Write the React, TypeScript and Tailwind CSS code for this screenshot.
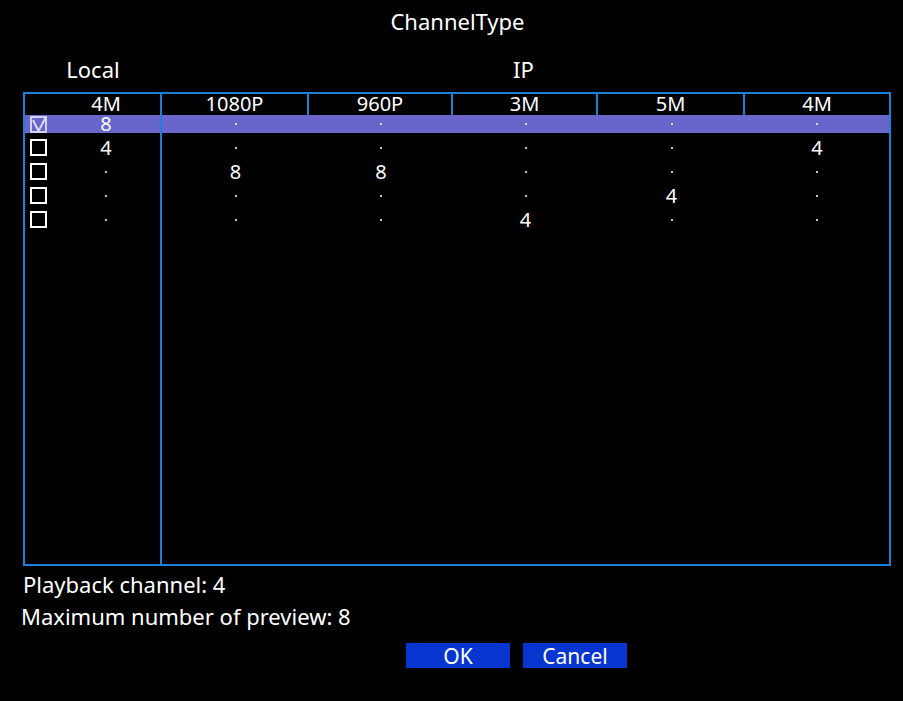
const rows = [
  { checked: true, values: ["8", ".", ".", ".", ".", "."] },
  { checked: false, values: ["4", ".", ".", ".", ".", "4"] },
  { checked: false, values: [".", "8", "8", ".", ".", "."] },
  { checked: false, values: [".", ".", ".", ".", "4", "."] },
  { checked: false, values: [".", ".", ".", "4", ".", "."] },
];

const ipCols = ["1080P", "960P", "3M", "5M", "4M"];
const ipWidths = ["w-[147px]", "w-[144px]", "w-[145px]", "w-[147px]", "flex-1"];

const Cell = ({ value }: { value: string }) =>
  value === "." ? (
    <span className="block w-[2px] h-[2px] rounded-full bg-white" />
  ) : (
    <span className="text-[20px] leading-[16px]">{value}</span>
  );

const CheckBox = ({ checked }: { checked: boolean }) =>
  checked ? (
    <div className="relative w-[17px] h-[17px] border-2 border-[#d2d0f3] mt-[1px]">
      <svg className="absolute -left-[2px] -top-[2px]" width="17" height="17" viewBox="0 0 17 17">
        <polyline points="3,4 8.5,15 16,1" fill="none" stroke="#dcdaf6" strokeWidth="2" />
      </svg>
    </div>
  ) : (
    <div className="w-[17px] h-[17px] border-2 border-white" />
  );

export default function App() {
  return (
    <div
      className="w-[903px] h-[701px] bg-black text-white flex flex-col"
      style={{ fontFamily: '"Noto Sans", "Open Sans", sans-serif' }}
    >
      <div className="mt-[6px] h-[30px] text-[22px] leading-[30px] text-center pl-[12px]">ChannelType</div>

      <div className="mt-[18px] h-[30px] flex px-[23px] text-[22px] leading-[30px]">
        <div className="w-[140px] text-center">Local</div>
        <div className="flex-1 text-center pl-[4px]">IP</div>
      </div>

      <div className="mt-[8px] ml-[23px] w-[868px] h-[474px] border-2 border-[#1a80d8] flex flex-col">
        <div className="flex h-[21px] text-[20px] leading-[20px]">
          <div className="w-[137px] border-r-2 border-[#1a80d8] pl-[27px] text-center">4M</div>
          {ipCols.map((c, i) => (
            <div
              key={i}
              className={`${ipWidths[i]} text-center ${i < 4 ? "border-r-2 border-[#1a80d8]" : ""}`}
            >
              {c}
            </div>
          ))}
        </div>

        <div className="flex flex-1">
          <div className="w-[137px] border-r-2 border-[#1a80d8] flex flex-col">
            {rows.map((r, i) => (
              <div key={i} className="h-[24px]">
                <div className={`h-[18px] flex items-start pl-[5px] ${r.checked ? "bg-[#6866cb]" : ""}`}>
                  <CheckBox checked={r.checked} />
                  <div className="flex-1 h-[18px] pl-[5px] flex items-center justify-center">
                    <Cell value={r.values[0]} />
                  </div>
                </div>
              </div>
            ))}
          </div>
          <div className="flex-1 flex flex-col">
            {rows.map((r, i) => (
              <div key={i} className="h-[24px]">
                <div className={`h-[18px] flex ${r.checked ? "bg-[#6866cb]" : ""}`}>
                  {r.values.slice(1).map((v, j) => (
                    <div key={j} className={`${ipWidths[j]} h-[18px] flex items-center justify-center`}>
                      <Cell value={v} />
                    </div>
                  ))}
                </div>
              </div>
            ))}
          </div>
        </div>
      </div>

      <div className="mt-[2px] pl-[23px] h-[32px] text-[22px] leading-[32px]">Playback channel: 4</div>
      <div className="pl-[21px] h-[32px] text-[22px] leading-[32px]">Maximum number of preview: 8</div>

      <div className="mt-[11px] flex gap-[13px] pl-[406px]">
        <button className="w-[104px] h-[25px] bg-[#0636cf] text-[21px] leading-[24px] text-center">OK</button>
        <button className="w-[104px] h-[25px] bg-[#0636cf] text-[21px] leading-[24px] text-center">Cancel</button>
      </div>
    </div>
  );
}
